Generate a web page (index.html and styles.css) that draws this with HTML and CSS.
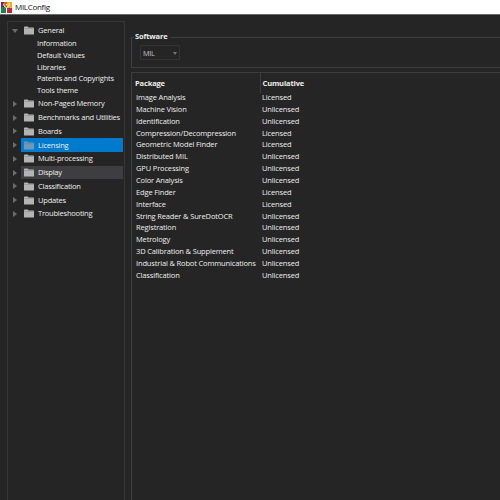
FILE: index.html
```
<!DOCTYPE html>
<html lang="en">
<head>
<meta charset="utf-8">
<title>MILConfig</title>
<link rel="stylesheet" href="styles.css">
</head>
<body>
<svg width="0" height="0" class="defs" aria-hidden="true">
  <symbol id="folder" viewBox="0 0 10 9"><path d="M0 1.2Q0 .5.7.5H3.6L4.6 1.5H9.3Q10 1.5 10 2.2V8Q10 8.5 9.4 8.5H.6Q0 8.5 0 8Z" fill="currentColor"/><path d="M.4 2.5H9.6" stroke="#777" stroke-width=".4"/></symbol>
</svg>
<header class="titlebar">
  <svg class="logo" viewBox="0 0 11 11">
    <path fill="#7b2352" d="M0 0H3V6H0z"/><path fill="#d8532b" d="M3 0H6V6H3z"/><path fill="#e8b126" d="M6 0H11V6H6z"/><path fill="#198451" d="M0 5H5V11H0z"/><path fill="#ba2944" d="M6 6H11V11H6z"/>
    <path d="M2.8 1.5V3.5L5.5 6V10.5M8.2 1.5V3.5L5.5 6" fill="none" stroke="#fff" stroke-width="1"/><circle cx="5.5" cy="2.6" r=".8" fill="#fff"/>
  </svg>
  <span>MILConfig</span>
</header>
<div class="window">
  <nav class="tree">
    <div class="node open"><i class="arrow down"></i><div class="label"><svg class="folder"><use href="#folder"/></svg><span>General</span></div></div>
    <div class="children"><div>Information</div><div>Default Values</div><div>Libraries</div><div>Patents and Copyrights</div><div>Tools theme</div></div>
    <div class="node"><i class="arrow"></i><div class="label"><svg class="folder"><use href="#folder"/></svg><span>Non-Paged Memory</span></div></div>
    <div class="node"><i class="arrow"></i><div class="label"><svg class="folder"><use href="#folder"/></svg><span>Benchmarks and Utilities</span></div></div>
    <div class="node"><i class="arrow"></i><div class="label"><svg class="folder"><use href="#folder"/></svg><span>Boards</span></div></div>
    <div class="node"><i class="arrow"></i><div class="label selected"><svg class="folder"><use href="#folder"/></svg><span>Licensing</span></div></div>
    <div class="node"><i class="arrow"></i><div class="label"><svg class="folder"><use href="#folder"/></svg><span>Multi-processing</span></div></div>
    <div class="node"><i class="arrow"></i><div class="label hover"><svg class="folder"><use href="#folder"/></svg><span>Display</span></div></div>
    <div class="node"><i class="arrow"></i><div class="label"><svg class="folder"><use href="#folder"/></svg><span>Classification</span></div></div>
    <div class="node"><i class="arrow"></i><div class="label"><svg class="folder"><use href="#folder"/></svg><span>Updates</span></div></div>
    <div class="node"><i class="arrow"></i><div class="label"><svg class="folder"><use href="#folder"/></svg><span>Troubleshooting</span></div></div>
  </nav>
  <main class="content">
    <section class="group">
      <div class="legend">Software</div>
      <div class="select"><span>MIL</span><i class="caret"></i></div>
    </section>
    <section class="table">
      <div class="head"><span>Package</span><span>Cumulative</span></div>
      <div class="row"><span>Image Analysis</span><span>Licensed</span></div>
      <div class="row"><span>Machine Vision</span><span>Unlicensed</span></div>
      <div class="row"><span>Identification</span><span>Unlicensed</span></div>
      <div class="row"><span>Compression/Decompression</span><span>Licensed</span></div>
      <div class="row"><span>Geometric Model Finder</span><span>Licensed</span></div>
      <div class="row"><span>Distributed MIL</span><span>Unlicensed</span></div>
      <div class="row"><span>GPU Processing</span><span>Unlicensed</span></div>
      <div class="row"><span>Color Analysis</span><span>Unlicensed</span></div>
      <div class="row"><span>Edge Finder</span><span>Licensed</span></div>
      <div class="row"><span>Interface</span><span>Licensed</span></div>
      <div class="row"><span>String Reader &amp; SureDotOCR</span><span>Unlicensed</span></div>
      <div class="row"><span>Registration</span><span>Unlicensed</span></div>
      <div class="row"><span>Metrology</span><span>Unlicensed</span></div>
      <div class="row"><span>3D Calibration &amp; Supplement</span><span>Unlicensed</span></div>
      <div class="row"><span>Industrial &amp; Robot Communications</span><span>Unlicensed</span></div>
      <div class="row"><span>Classification</span><span>Unlicensed</span></div>
    </section>
  </main>
</div>
</body>
</html>
```
FILE: styles.css
```
* { box-sizing: border-box; }
body {
  margin: 0;
  width: 500px;
  height: 500px;
  overflow: hidden;
  display: flex;
  flex-direction: column;
  background: #252525;
  color: #eee;
  font: 7.5px/12px "Open Sans", "Noto Sans", sans-serif;
  letter-spacing: -0.15px;
  white-space: nowrap;
}
.defs { position: absolute; }
.titlebar {
  height: 15px;
  flex: none;
  display: flex;
  align-items: center;
  gap: 3px;
  padding-left: 1px;
  background: #fff;
  color: #111;
  border-bottom: 1px solid #6a6c6b;
  font-size: 8px;
  letter-spacing: -0.3px;
}
.logo { width: 11px; height: 11px; }
.window { flex: 1; display: flex; padding: 6px 0 0 7px; min-height: 0; }
.tree {
  width: 118px;
  border: 1px solid #363637;
  border-bottom: 0;
  padding-top: 2px;
  letter-spacing: -0.21px;
}
.node { height: 13.75px; display: flex; align-items: center; }
.arrow {
  width: 0;
  height: 0;
  margin: 0 4px 0 5px;
  border: 3px solid transparent;
  border-left: 4px solid #6c6c6c;
  border-right: 0;
}
.arrow.down {
  margin: 0 3px 0 4px;
  border: 3px solid transparent;
  border-top: 4px solid #6c6c6c;
  border-bottom: 0;
}
.label { flex: 1; height: 100%; display: flex; align-items: center; gap: 4px; padding-left: 3px; margin-right: 1px; }
.label span { line-height: 13px; }
.folder { width: 10px; height: 9px; color: #b4b4b4; }
.selected { background: #007acc; }
.selected .folder { color: #7099b9; }
.hover { background: #3e3e40; }
.children { padding-left: 29px; line-height: 11.87px; height: 59.2px; letter-spacing: -0.19px; }
.content { flex: 1; padding: 16px 0 0 6px; display: flex; flex-direction: column; }
.group { height: 31px; border: solid #3d3d40; border-width: 1px 0 1px 1px; padding: 7px 0 0 8px; position: relative; }
.legend { position: absolute; left: 2px; top: -8px; padding: 0 2px 0 1px; background: #252525; font-weight: bold; }
.select {
  width: 40px;
  height: 15px;
  border: 1px solid #343436;
  display: flex;
  align-items: center;
  justify-content: space-between;
  padding: 1px 2px 0 2px;
  font-size: 7.3px;
  letter-spacing: -0.3px;
  color: #c8c8c8;
}
.caret { border: 2.5px solid transparent; border-top: 3px solid #777; border-bottom: 0; }
.table { flex: 1; margin-top: 4px; border: solid #3d3d40; border-width: 1px 0 0 1px; }
.head, .row { display: grid; grid-template-columns: 126px 1fr; }
.head { height: 18px; line-height: 20px; font-weight: bold; padding-left: 3px; }
.head span:last-child { border-left: 1px solid #3d3d40; padding-left: 1.5px; margin-left: -1px; }
.row { height: 11.87px; line-height: 12px; padding-left: 4px; }
```
